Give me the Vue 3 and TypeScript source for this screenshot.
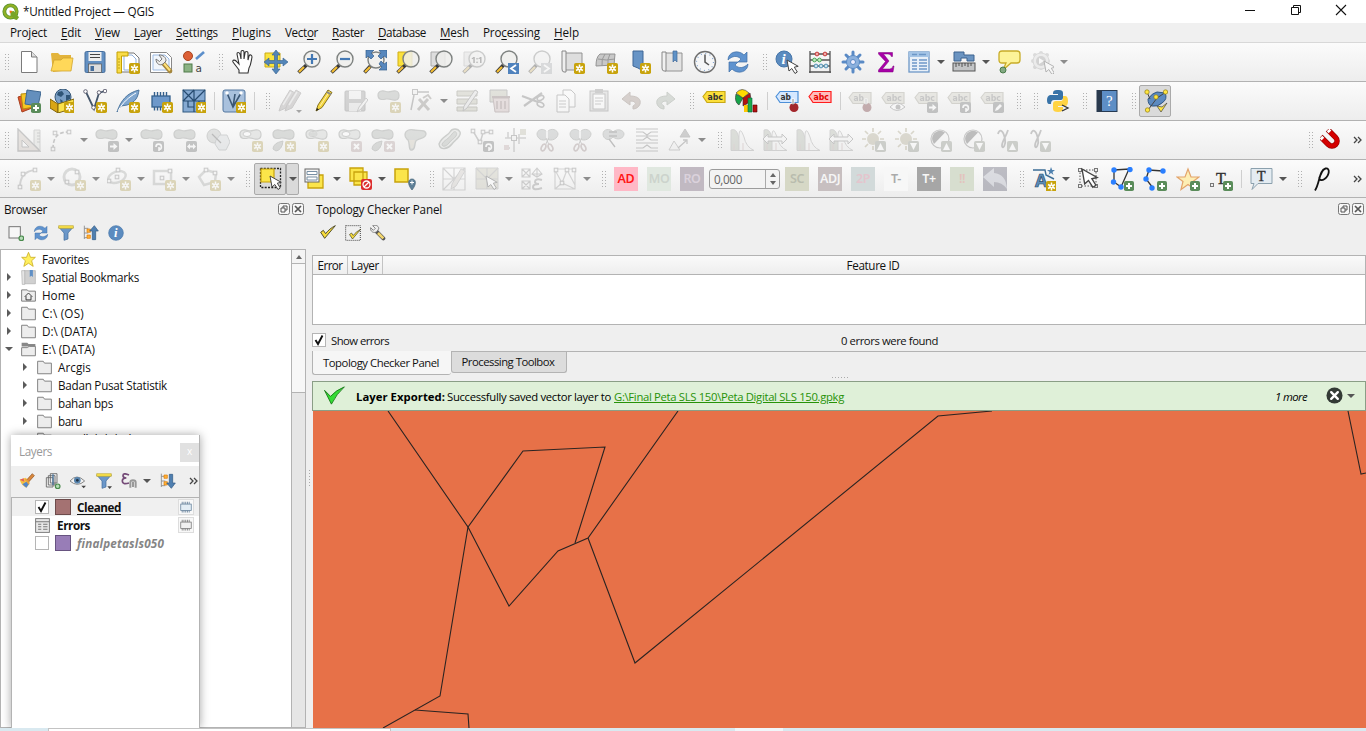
<script setup lang="ts">
type Item = { k: string; i?: string; dim?: boolean; on?: boolean; arrow?: boolean; w?: number; t?: string; bg?: string; fg?: string }

// Adjusts tracking so a label occupies the given width.
const vFit = {
  mounted(el: HTMLElement, b: { value: number }) {
    const n = (el.textContent || '').trim().length
    const w = el.getBoundingClientRect().width
    if (n > 0 && b.value) el.style.letterSpacing = `${(b.value - w) / n}px`
  },
}

const star = (x = 13, y = 13) =>
  `<g transform="translate(${x} ${y})"><rect width="11" height="11" rx="1.8" fill="#c8a30c"/><path d="M5.5 1.6v7.8M2.1 3.5l6.8 4M8.9 3.5l-6.8 4" stroke="#fff" stroke-width="1.5"/><circle cx="5.5" cy="5.5" r="1.9" fill="#fff"/><circle cx="5.5" cy="5.5" r=".8" fill="#c8a30c"/></g>`
const plus = (x = 13, y = 13) =>
  `<g transform="translate(${x} ${y})"><rect width="10" height="10" rx="1.8" fill="#5a8c5a"/><path d="M5 2v6M2 5h6" stroke="#fff" stroke-width="2"/></g>`
const badge = (g: string, c = '#6b7070') =>
  `<g transform="translate(13 13)"><rect width="11" height="11" rx="1.8" fill="${c}"/>${g}</g>`
const bArrow = badge('<path d="M2 4.5h3.5V2L9.500 5.500 5.500 9V6.500H2z" fill="#fff"/>')
const bTurn = badge('<path d="M3 6a2.700 2.700 0 1 1 3 2.500M6 6v4" fill="none" stroke="#fff" stroke-width="1.600"/>')
const bBoth = badge('<path d="M1 5.500l3-3v2h3v-2l3 3-3 3v-2H4v2z" fill="#fff"/>')
const bX = badge('<path d="M3 3l5 5M8 3l-5 5" stroke="#fff" stroke-width="2"/>', '#c49a9a')
const bUp = badge('<path d="M5.500 2L9 9H2z" fill="#fff"/>', '#85907a')
const bDown = badge('<path d="M5.500 9L9 2H2z" fill="#fff"/>', '#85907a')
const bPen = badge('<path d="M2 9l1-3 4-4 2 2-4 4z" fill="#fff"/>')
const lens = (x: number, y: number, inner = '') =>
  `<path d="M1.500 22.500L${x - 5.500} ${y + 6}" stroke="#3a3a3a" stroke-width="3.600"/><path d="M2 22l5-5" stroke="#f5bf33" stroke-width="2.200"/><circle cx="${x}" cy="${y}" r="8" fill="#eeeeec" fill-opacity=".85" stroke="#7e8280" stroke-width="1.400"/>${inner}`
const cursor = (x: number, y: number) =>
  `<path transform="translate(${x} ${y})" d="M0 0l2 11 2.800-2.500 3.200 5 2.300-1.500-3-4.800 3.900-.900z" fill="#fff" stroke="#444" stroke-width="1"/>`
const blob = '<path d="M1 6C1 2 5 1 9 2.500S15 1 19 2s4 8 0 9-6-2-10-1S1 11 1 6z" fill="#a5ada5" stroke="#858b85" stroke-width="1.200"/>'
const ring = '<path d="M1 6C1 2 5 1 9 2.500S15 1 19 2s4 8 0 9-6-2-10-1S1 11 1 6z" fill="#c6cbc6" stroke="#858b85" stroke-width="1.200"/><ellipse cx="8" cy="6" rx="4" ry="2.500" fill="#fff" stroke="#858b85"/>'
const tag = (f: string, s: string, c: string, txt = 'abc') =>
  `<path d="M1 8.500L5 3.500h18v11H5z" fill="${f}" stroke="${s}" stroke-width="1.200"/><text x="5.500" y="12.300" font-size="9.500" font-family="DejaVu Sans" font-weight="bold" textLength="${txt === 'abc' ? 15.5 : 10.5}" lengthAdjust="spacingAndGlyphs" fill="${c}">${txt}</text>`
const pin = '<circle cx="19" cy="18.500" r="4.500" fill="#a3262b"/><path d="M18 15V9.500" stroke="#fff" stroke-width="3"/><path d="M18 16v-6" stroke="#888" stroke-width="1"/>'
const node = (x: number, y: number, r = 1.8) => `<rect x="${x - r}" y="${y - r}" width="${2 * r}" height="${2 * r}" fill="#eee" stroke="#777" stroke-width="1"/>`
const dot = (x: number, y: number) => `<circle cx="${x}" cy="${y}" r="2.700" fill="#2a7fff"/>`
const snip = '<path d="M11 11C6 14 1 10 1 6s6-7 10-2c4-5 11-2 11 2s-6 8-11 5z" fill="#a9b1b1" stroke="#858b85"/><path d="M11 2v11" stroke="#fff" stroke-width="1.500"/><path d="M9.500 17l3-7M13 17l-3-7" stroke="#888"/><ellipse cx="7.500" cy="19.500" rx="2" ry="3.500" fill="none" stroke="#a88" stroke-width="1.700" transform="rotate(25 7.500 19.500)"/><ellipse cx="14.500" cy="19.500" rx="2" ry="3.500" fill="none" stroke="#a88" stroke-width="1.700" transform="rotate(-25 14.500 19.500)"/>'
const refresh = '<path d="M2 10C2 2 12-1 18 5l3-3v10h-9l3-3c-4-4-9-3-13 1z" fill="#5f93cf" stroke="#3f6ea5" stroke-width=".7"/><path d="M22 14c0 8-10 11-16 5l-3 3V12h9l-3 3c4 4 9 3 13-1z" fill="#5f93cf" stroke="#3f6ea5" stroke-width=".7"/>'
const hist = '<path d="M1 22.500V2q5-2 7 5l5 15.500z" fill="#a9b59e" stroke="#999"/><path d="M9 22.500V6q1-8 5 3 2 10 10 13.500z" fill="#eee" stroke="#999"/><path d="M4 22v-6M13 22v-7" stroke="#c99" stroke-width="1"/>'
const wide = '<path d="M0 11l5-5v3h14V6l5 5-5 5v-3H5v3z" fill="#f2f2f2" stroke="#777"/>'
const sun = '<g stroke="#ae9e62" stroke-width="1.700"><path d="M11 0v4M11 18v4M0 11h4M18 11h4M3 3l3 3M16 6l3-3M3 19l3-3"/></g><circle cx="11" cy="11" r="6" fill="#b1a671"/>'
const contrast = '<circle cx="12" cy="11" r="9" fill="#f5f5f5" stroke="#777" stroke-width="1.200"/><path d="M17 4.500A8 8 0 0 0 6 16z" fill="#5a5a5a"/>'
const gamma = '<path d="M4 6C5 1 9 1 11 11c1 5-2 11-3 7-.500-4 4-9 6-16" fill="none" stroke="#777" stroke-width="1.800"/>'
const pencil = (c = '#f5d63d') => `<path d="M3 22l2-6L15 1l4 2.500-10 15z" fill="${c}" stroke="#857220" stroke-width="1"/><path d="M7 17L16.500 2.500" stroke="#fff" stroke-width="1" opacity=".6"/><path d="M3 22l1-3 2 1.500z" fill="#222"/><path d="M14 3l4 2.500" stroke="#888" stroke-width="2"/>`
const gpencil = '<path d="M2 22l2-6L13 1l5 3-9 15z" fill="#a9a2a2" stroke="#8a8383"/><path d="M6 16L14 3" stroke="#ddd" stroke-width="1.500"/>'
const check = '<path d="M1 11l6 9L23 1C17 4 12 8 8.500 13L5 8z" fill="#f7dc3d" stroke="#3d3a1a" stroke-width="1.300"/>'
const chip = (c: string, f: string) => `<rect x="3" y="7" width="18" height="11" fill="${f}" stroke="${c}" stroke-width="1.300"/><path d="M5.500 3v4M8.500 3v4M11.500 3v4M14.500 3v4M17.500 3v4M5.500 18v3.500M8.500 18v3.500M11.500 18v3.500M14.500 18v3.500M17.500 18v3.500" stroke="${c}" stroke-width="1.400"/>`
const wrench = '<path d="M10 10l10 10" stroke="#555" stroke-width="6" stroke-linecap="round"/><path d="M12 12l8 8" stroke="#f2d66c" stroke-width="4"/><path d="M4 1l4 4-3 3-4-4c-1 6 5 9 9 6l3-4C14 2 9-1 4 1z" fill="#eee" stroke="#777" stroke-width="1.300"/>'
const funnel = '<path d="M1 3h22l-8 9v9l-6 2V12z" fill="#6b97c9" stroke="#406a98"/><path d="M1 1h22v4H1z" fill="#f8e04b" stroke="#b19a22" stroke-width=".8"/>'

const icons: Record<string, string> = {
  newp: '<path d="M4.500 1.500h10l5.500 5.500v15.500H4.500z" fill="#fff" stroke="#7b7b7b"/><path d="M14.500 1.500v5.500H20" fill="#ddd" stroke="#7b7b7b"/>',
  open: '<path d="M1 4q0-1 1-1h6l2 2h11v15l-18 2z" fill="#e3b43c"/><path d="M4 10h7l2-2h10l-2 13H1z" fill="#ffd859" stroke="#d0a42e" stroke-width=".8"/>',
  save: '<rect x="2" y="1.500" width="20" height="21" rx="1.500" fill="#6390c2" stroke="#456d9b"/><rect x="5.500" y="2" width="13" height="9" fill="#eee"/><path d="M7 4.500h10M7 7.500h10" stroke="#444" stroke-width="1"/><rect x="5.500" y="14" width="13" height="8.500" fill="#ddd" stroke="#555" stroke-width=".7"/><rect x="7.500" y="16" width="3.500" height="5" fill="#456d9b"/>',
  layout: '<path d="M4 3h14l5 5v14H4z" fill="#fff" stroke="#777"/><path d="M8 5h8l4 4v11H8z" fill="none" stroke="#8fb0dc"/><path d="M1 2h11v4H5.500v17H1z" fill="#f9dc49" stroke="#c4a000"/><path d="M2 9h2M2 12h2M2 15h2M2 18h2" stroke="#a88b00" stroke-width=".7"/>' + star(),
  manager: '<path d="M1.500 2.500h16l5 5v15h-21z" fill="#fff" stroke="#888"/><path d="M4 5h12l4 4v11H4z" fill="#f1f6fc" stroke="#9dbbe4"/><path d="M14 13l7 8" stroke="#a6863a" stroke-width="4.500" stroke-linecap="round"/><path d="M15 13.500l6 7" stroke="#ffe27a" stroke-width="2"/><path d="M10 5l3 4-2.500 2.500L7 9c0 5 4 7 7 5l3-3c0-4-3-6-7-6z" fill="#eee" stroke="#777"/>',
  style: '<circle cx="6" cy="6" r="4.500" fill="#dc6036" stroke="#a9441e"/><path d="M14 9l8-7" stroke="#5c8fcb" stroke-width="2.600"/><rect x="2" y="14" width="8" height="8" fill="#8bb283" stroke="#4f7a48"/><text x="13.500" y="22" font-family="DejaVu Sans" font-size="10.500" fill="#444">a</text>',
  hand: '<path d="M8 23v-3c-2-3-4-5-6-8-1-2 2-3 4 0l2 2L6 4c0-2 2-2 3 0l1 5V2c0-2 3-2 3 0v7l1-6c0-2 3-2 3 0v7l1-4c1-2 3-1 3 1-1 5-1 8-3 11l-1 5z" fill="#fff" stroke="#333" stroke-width="1.100"/>',
  pansel: '<path d="M1 3h15v14H1z" fill="#fae43d" stroke="#ccab16"/><path d="M12 0l4 5h-2.500v5.500H19V8l5 4-5 4v-2.500h-5.500V19H16l-4 5-4-5h2.500v-5.500H5V16l-5-4 5-4v2.500h5.500V5H8z" fill="#5385b8" stroke="#33608f" stroke-width=".6"/>',
  zin: lens(15, 9, '<path d="M15 4v10M10 9h10" stroke="#4479b4" stroke-width="2.200"/>'),
  zout: lens(15, 9, '<path d="M10 9h10" stroke="#4479b4" stroke-width="2.200"/>'),
  zfull: lens(13, 10) + '<path d="M3 0h8L8 3l3 3-3 3-3-3-2 2zM24 0v8l-3-2-3 3-3-3 3-3-2-3zM24 20h-8l3-3-3-3 2-3 3 3 3-2z" fill="#5787bd" stroke="#345f8e" stroke-width=".7"/>',
  zsel: '<path d="M2 2h14v14H2z" fill="#fae13c" stroke="#d0ae17"/>' + lens(15, 9),
  zlay: '<path d="M2 2h14v14H2z" fill="#ddd" stroke="#aaa"/>' + lens(15, 9),
  znat: '<path d="M2 2h14v14H2z" fill="#ddd" stroke="#aaa"/>' + lens(15, 9, '<text x="9" y="12.500" font-size="9" font-weight="bold" font-family="Open Sans" fill="#444" textLength="12">1:1</text>'),
  zlast: lens(14, 9) + '<rect x="13" y="13" width="11" height="11" fill="#4f82bd"/><path d="M21 15l-5 3.500 5 3.500" fill="none" stroke="#fff" stroke-width="1.800"/>',
  znext: lens(14, 9) + '<rect x="13" y="13" width="11" height="11" fill="#a9b0b6"/><path d="M16 15l5 3.500-5 3.500" fill="none" stroke="#fff" stroke-width="1.800"/>',
  map: '<path d="M4 3h17v17H4z" fill="#dedede" stroke="#929292"/><path d="M1 1h4v21H3q-2 0-2-3z" fill="#eee" stroke="#888"/>' + star(),
  mesh3d: '<path d="M6 4l15 0-1 11-18 1q0-9 4-12z" fill="#c8c8c8" stroke="#929292"/><path d="M4 9q8 2 17 0M11 4Q7 9 8 16M16 4q-3 5-2 12" fill="none" stroke="#999"/>' + star(),
  bm: '<path d="M6 1h10v20l-5-3-5-2z" fill="#6794c6" stroke="#3f6796"/>' + star(),
  book: '<path d="M5 3h17v18H5z" fill="#e3e3e3" stroke="#929292"/><path d="M2 2h4v19H4q-2 0-2-3z" fill="#f1f1f1" stroke="#888"/><path d="M13 1h4v11l-2-2-2 2z" fill="#5f92c7" stroke="#40699a" stroke-width=".7"/>',
  clock: '<circle cx="12" cy="12" r="10.500" fill="#f5f6f7" stroke="#6f6f6f" stroke-width="1.400"/><circle cx="12" cy="12" r="8.500" fill="none" stroke="#85a6cf" stroke-width="1.200" stroke-dasharray="1 3.450"/><path d="M12 4.500V12l4 3" fill="none" stroke="#555" stroke-width="1.500"/>',
  refresh,
  ident: '<circle cx="9" cy="9" r="8" fill="#5b8bbf" stroke="#4676aa"/><text x="6.500" y="14" font-family="Liberation Serif" font-style="italic" font-weight="bold" font-size="15" fill="#fff">i</text>' + cursor(12, 10),
  abacus: '<path d="M2 1v22M22 1v22M2 4h20M2 10h20M2 16h20M1 22h22" stroke="#555" stroke-width="1.300"/><g fill="#f4aaa8" stroke="#c53a3a"><circle cx="9" cy="4" r="1.900"/><circle cx="17" cy="4" r="1.900"/></g><g fill="#bfe8bf" stroke="#4ea75b"><circle cx="6.500" cy="10" r="1.900"/><circle cx="11.500" cy="10" r="1.900"/></g><g fill="#cbe2ee" stroke="#5292b4"><circle cx="8" cy="16" r="1.900"/><circle cx="13" cy="16" r="1.900"/><circle cx="18" cy="16" r="1.900"/></g>',
  gear: '<g stroke="#5a8ac5" stroke-width="3" stroke-linecap="round"><path d="M12 2v20M2 12h20M5 5l14 14M19 5L5 19"/></g><circle cx="12" cy="12" r="6.500" fill="#8bb0dd" stroke="#5a8ac5"/><circle cx="12" cy="12" r="2.500" fill="#eef" stroke="#5a8ac5"/>',
  sigma: '<path d="M4.500 2.500h14v4h-1.200Q17 4 14 4H9.500l5.500 7-6.500 8h7q3 0 3.500-3h1l-1 6H4.500v-2l7-8.500-7-7.500z" fill="#a800a8" stroke="#7c007c" stroke-width=".5"/>',
  table: '<rect x="2" y="2" width="20" height="20" fill="#e9f0f8" stroke="#6d97c7" stroke-width="1.300"/><path d="M2 2h20v5H2z" fill="#a4c4e6"/><path d="M5 4.500h5M12 4.500h7M5 10h5M12 10h8M5 13h5M12 13h8M5 16h5M12 16h8M5 19h5M12 19h8" stroke="#6d97c7" stroke-width="1.300"/>',
  measure: '<path d="M2 2h10v3h10v6h-7V8H9v3H2z" fill="#6b94c1" stroke="#3c628f"/><rect x="1" y="13" width="22" height="8" fill="#c3c5c7" stroke="#555"/><path d="M4 13v4M7 13v3M10 13v4M13 13v3M16 13v4M19 13v3" stroke="#444" stroke-width=".9"/>',
  tip: '<path d="M5 1h15q3 0 3 3v6q0 3-3 3h-6l-8 7 3-7H5q-3 0-3-3V4q0-3 3-3z" fill="#fdf398" stroke="#c8ac28" stroke-width="1.300"/><circle cx="6" cy="20" r="3" fill="#83a983" stroke="#497c49"/>',
  run: '<g stroke="#aaa" stroke-width="4" stroke-linecap="round"><path d="M11 3v15M3 11h15M5 5l12 12M17 5L5 17"/></g><circle cx="11" cy="11" r="8" fill="#ddd" stroke="#aaa"/><circle cx="11" cy="11" r="5" fill="#999"/><path d="M9 8l5 3-5 3z" fill="#fff"/>' + cursor(14, 11),
  dsm: '<path d="M1 8l10-3 4 14-10 4z" fill="#e1592d" stroke="#a63f1d"/><path d="M4 5l11-1 2 14-11 2z" fill="#f7c524" stroke="#b58c0e"/><path d="M10 1l14 2-3 14-13-2z" fill="#648fbd" stroke="#3f6892"/>' + plus(14, 14),
  geopkg: '<circle cx="13" cy="8" r="8" fill="#7a9fc5" stroke="#365777"/><path d="M8 3l4-1 2 3-3 3-4-2zM16 6l4 0 0 4-4 2zM10 10l3 2-2 3" fill="#2f5577"/><path d="M0 10l8 5v9L0 19z" fill="#d9a514" stroke="#80650c"/><path d="M8 15l16-5v9L8 24z" fill="#fbe24a" stroke="#80650c"/>' + star(14, 13),
  vec: '<path d="M3 3l8 17L16 4l6-2" fill="none" stroke="#45566a" stroke-width="1.800"/><g fill="#fff" stroke="#667"><circle cx="2.500" cy="2.500" r="1.800"/><circle cx="16" cy="3.500" r="1.800"/><circle cx="22" cy="2" r="1.800"/><circle cx="10.500" cy="18.500" r="1.800"/></g>' + star(),
  quill: '<path d="M1 23C5 11 11 4 23 1 22 8 20 13 11 16L5 17z" fill="#7fa6cf" stroke="#4d769f"/><path d="M2 22C7 13 13 8 20 4" stroke="#fff" stroke-width="1" fill="none"/>' + star(),
  chip: chip('#34608d', '#6d98ca') + star(),
  meshl: '<rect x="1" y="1" width="22" height="22" fill="#86aad2" stroke="#2f5880"/><path d="M1 1l11 11M12 1L1 12M23 1L12 12M12 1v22M1 12h22M17 12v11M6 12v6h6" fill="none" stroke="#264b70" stroke-width="1.200"/>' + star(14, 13),
  virt: '<rect x="1" y="1" width="22" height="22" rx="2" fill="#a9c1dd" stroke="#53779f"/><path d="M5 4l6 14L19 4M11 18l2-13" fill="none" stroke="#3b5775" stroke-width="1.600"/><circle cx="5" cy="4" r="1.700" fill="#fff"/><circle cx="19" cy="4" r="1.700" fill="#fff"/>' + star(14, 13),
  pencils: '<g transform="translate(-1 0)">' + gpencil + '</g><g transform="translate(5 0)">' + gpencil + '</g><path d="M18 21h6l-3 3z" fill="#222"/>',
  pencil: '<g transform="translate(2 0)">' + pencil() + '</g>',
  savee: '<rect x="1" y="2" width="20" height="20" rx="1" fill="#999" stroke="#777"/><rect x="5" y="2" width="12" height="8" fill="#eee"/><rect x="5" y="14" width="12" height="8" fill="#ddd"/><path d="M13 23l2-5 7-9 2 2-7 9z" fill="#eee" stroke="#888"/>',
  blobnew: blob + star(), vtx: node(5, 3, 2.5) + '<path d="M7 3h12M4 6L1 21" stroke="#777" stroke-width="1.500" fill="none"/><path d="M8 21l10-11M9 10l10 11" stroke="#8a857c" stroke-width="3"/><path d="M13 9l5-3 3 4" stroke="#8a857c" stroke-width="2" fill="none"/>',
  modattr: '<path d="M2 2h20v5H2zM2 10h20v5H2zM2 18h20v4H2z" fill="#c0bfa0" stroke="#808065"/><path d="M8 22l1-5L20 1l3 2-11 16z" fill="#ddd" stroke="#777"/>',
  trash: '<path d="M2 1h17v12H2z" fill="#bdbd9c" stroke="#777"/><path d="M5 9h16v14H7z" fill="#dcb4b4" stroke="#946c6c"/><path d="M4 8h18" stroke="#946c6c" stroke-width="2"/><path d="M9 12v8M13 12v8M17 12v8" stroke="#946c6c" stroke-width="1.500"/>',
  cut: '<path d="M1 7l16 6M3 17L21 4" stroke="#777" stroke-width="2.200"/><ellipse cx="19.500" cy="9" rx="3.500" ry="2.200" fill="none" stroke="#777" stroke-width="1.600" transform="rotate(-25 19.500 9)"/><ellipse cx="19.500" cy="15.500" rx="3.500" ry="2.200" fill="none" stroke="#777" stroke-width="1.600" transform="rotate(25 19.500 15.500)"/>',
  copy: '<path d="M9 1h8l4 4v13H9z" fill="#fff" stroke="#777"/><path d="M3 6h8l4 4v13H3z" fill="#fff" stroke="#777"/><path d="M5 12h7M5 15h7M5 18h7" stroke="#888"/>',
  paste: '<rect x="3" y="2" width="18" height="20" fill="#ccc" stroke="#777"/><rect x="6" y="5" width="12" height="15" fill="#fff" stroke="#777"/><rect x="8" y="0" width="8" height="4" fill="#888"/><path d="M8 9h8M8 12h8M8 15h6" stroke="#888"/>',
  undo: '<path d="M2 10l8-7v4c9 0 11 4 10 8-1 3-4 5-7 5v-3c4-2 3-5-3-5v4z" fill="#b08d7a" stroke="#8d6e5e"/>',
  redo: '<path d="M22 10l-8-7v4C5 7 3 11 4 15c1 3 4 5 7 5v-3c-4-2-3-5 3-5v4z" fill="#9fb19b" stroke="#7b8e77"/>',
  abc: '<g transform="translate(0 -1)">' + tag('#fcdf3a', '#c8a814', '#333') + '</g>',
  diag: '<path d="M8 9L1 5q-2 8 3 11z" fill="#16a349" stroke="#333" stroke-width=".6"/><path d="M8 9L1 4q6-7 13 0z" fill="#ffda00" stroke="#333" stroke-width=".6"/><path d="M8 9l7-5q3 9-7 13z" fill="#b51010" stroke="#333" stroke-width=".6"/><path d="M9 16h4v7H9z" fill="#ffc800"/><path d="M13 9h4v14h-4z" fill="#1cab4c" stroke="#064" stroke-width=".6"/><path d="M18 16h4v7h-4z" fill="#b51010" stroke="#500" stroke-width=".6"/>',
  abpin: '<g transform="translate(0 -1)">' + tag('#d5e8ff', '#4d90d8', '#333', 'ab') + '</g>' + pin,
  abcred: '<g transform="translate(0 -1)">' + tag('#ffbcbc', '#ff1d1d', '#e60000') + '</g>',
  dpin: tag('#cfcbb4', '#9d9a80', '#777', 'ab') + pin,
  deye: tag('#cfcbb4', '#9d9a80', '#777') + '<path d="M9 18q7-8 15 0-8 7-15 0z" fill="#fff" stroke="#777"/><circle cx="17" cy="18" r="2.500" fill="#777"/>',
  dmove: tag('#cfcbb4', '#9d9a80', '#777') + bArrow, drot: tag('#cfcbb4', '#9d9a80', '#777') + bTurn, dpen: tag('#cfcbb4', '#9d9a80', '#777') + bPen,
  py: '<path d="M7 6V4q0-3 4-3h2q4 0 4 3v5q0 2-2 2H8q-3 0-3 4H3q-2 0-2-4t3-5h8V5H7z" fill="#3873a8"/><path d="M17 7h2q3 0 3 5t-3 5h-7v1h5v2q0 3-5 3t-5-3v-5q0-3 3-3h5q2 0 2-3z" fill="#ffd343"/><path d="M16 16l6 3-6 3" fill="none" stroke="#333" stroke-width="1.300"/>',
  help: '<rect x="2" y="1.500" width="20" height="21" fill="#5d8ec5" stroke="#263a52"/><path d="M2 1h5v22H2z" fill="#29394d"/><text x="11" y="17" font-size="15" font-family="Liberation Serif" fill="#fff">?</text>',
  topo: '<path d="M4 10q4-6 9-7l8 1q3 6-3 10-4 4-10 3-4-1-4-7z" fill="#5c8ac0" stroke="#2f5784"/><path d="M3 3l3 7M22 3l-9 6-9 12" fill="none" stroke="#444"/><g fill="#ffe640" stroke="#8f7c18" stroke-width=".7"><circle cx="3" cy="3" r="2.200"/><circle cx="21.500" cy="3" r="2.200"/><circle cx="12" cy="8" r="2.200"/><circle cx="3.500" cy="21" r="2.200"/></g><path d="M13 17l4 6 6-9-5 4z" fill="#ffe640" stroke="#444" stroke-width=".7"/>',
  ruler: '<path d="M1 1v22h22z" fill="#d3bfb0" stroke="#777" stroke-width="1.400"/><path d="M5 12v7h7z" fill="#f5f5f5" stroke="#777"/><path d="M17 2h6v20l-6-6z" fill="#d9dbd0" stroke="#999"/><path d="M20 5h3M20 8h3M20 11h3M20 14h3" stroke="#888"/>',
  curve: '<path d="M3 21C3 10 7 4 18 4" fill="none" stroke="#777" stroke-width="1.600" stroke-dasharray="4 2"/>' + node(3, 21) + node(5, 5) + node(19, 4),
  bmove: blob + bArrow, brot: blob + bTurn, bscale: blob + bBoth,
  simp: '<circle cx="8" cy="8" r="7" fill="#b6bcb7" stroke="#858b87"/><path d="M10 12l4-5h7l3 7-4 8h-7l-4-6z" fill="#ced7dc" stroke="#8e989c"/><path d="M6 6l9 9" stroke="#555" stroke-width="1.300"/>',
  addring: ring + star(), addpart: blob + '<path d="M1 21q0-6 10-8-1 9-7 10z" fill="#a5ada5" stroke="#858b85"/>' + star(), fillring: ring + '<ellipse cx="8" cy="6" rx="3.500" ry="2" fill="#a5ada5"/>' + star(), delring: ring + bX,
  delpart: blob + '<path d="M1 21q0-6 10-8-1 9-7 10z" fill="#a5ada5" stroke="#858b85"/>' + bX,
  reshape: '<path d="M1 7C1 2 6 1 10 2s12-1 12 4-8 4-10 7 0 8-4 9S6 14 4 12 1 10 1 7z" fill="#adb5ae" stroke="#858d85" stroke-width="1.300"/><path d="M5 12h6l-2 8H7z" fill="#d0c5a5"/>',
  offset: '<path d="M2 16C5 8 11 8 13 4s8-4 10 0-5 8-8 12-12 8-13 0z" fill="#d5d9d2" stroke="#7f897f" stroke-width="1.400"/><path d="M5 16c2-4 7-5 10-10s6-1 4 2-5 4-7 7-7 5-7 1z" fill="#a9b0a5" stroke="#7f897f"/>',
  vsplit: '<path d="M3 3l7 12 3-10 8-1" fill="none" stroke="#888" stroke-width="1.500"/>' + node(3, 3) + node(10, 14) + node(13, 4) + node(21, 4) + bTurn,
  align: '<path d="M11 0v24M2 10h21M5 10V4M16 6v10M2 20h5" stroke="#999" stroke-width="1.600"/><rect x="17" y="1" width="6" height="6" fill="#bdbb97"/><rect x="1" y="17" width="5" height="5" fill="#d2a9a9"/>' + node(11, 10, 2.5),
  snip,
  merge: '<path d="M11 9C7 14 1 11 1 6s7-6 10-2c4-4 11-2 11 2s-6 7-11 3z" fill="#a9b1b1" stroke="#858b85"/><path d="M7 4h8M7 8h8M7 11l6 8" stroke="#666" stroke-width="1.300" fill="none"/>',
  trim: '<path d="M1 4h7l4 3 4-3h7M1 12h7l4-3 4 3h7M1 20h7l4-3 4 3h7M1 8h22M1 15h22M1 23h22M1 1h22" fill="none" stroke="#777" stroke-width="1.200"/>',
  rots: '<path d="M1 22h11L6 13z" fill="#eee" stroke="#888"/><path d="M12 9h10L17 1z" fill="#888" stroke="#777"/><path d="M10 20l9-8M15 12h4v4" fill="none" stroke="#777" stroke-width="1.300"/>',
  h1: hist, h2: hist + wide, sunu: sun + bUp, sund: sun + bDown, conu: contrast + bUp, cond: contrast + bDown, gamu: gamma + bUp, gamd: gamma + bDown,
  magnet: '<g transform="rotate(-45 12 12)"><path d="M6.500 1.500v12a5.500 5.500 0 0 0 11 0v-12" fill="none" stroke="#970000" stroke-width="6"/><path d="M6.500 5v8.500a5.500 5.500 0 0 0 11 0V5" fill="none" stroke="#d40000" stroke-width="4.600"/><path d="M6.500 2v3M17.500 2v3" stroke="#fff" stroke-width="4.200"/></g>',
  arc: '<path d="M3 20C3 10 8 4 18 3" fill="none" stroke="#999" stroke-width="2"/>' + node(3, 20) + node(6, 7) + node(18, 3) + star(),
  circ: '<circle cx="10" cy="10" r="8" fill="none" stroke="#a5aaa5" stroke-width="3"/>' + node(15, 5) + node(5, 15) + star(),
  ell: '<ellipse cx="10" cy="10" rx="9" ry="5.500" transform="rotate(-20 10 10)" fill="none" stroke="#a5aaa5" stroke-width="2.500"/>' + node(11, 3) + node(2, 14) + node(10, 10) + star(),
  rect: '<rect x="2" y="4" width="17" height="13" fill="none" stroke="#a5aaa5" stroke-width="2.500"/>' + node(18, 4) + node(10, 11) + star(),
  poly: '<path d="M2 10l7-7 10 3-1 9-11 3z" fill="none" stroke="#a5aaa5" stroke-width="2.500"/>' + node(9, 3) + node(18, 6) + star(),
  sel: '<rect x="1.500" y="1.500" width="20" height="19" fill="none" stroke="#222" stroke-width="1.300" stroke-dasharray="2 1.300"/><path d="M2 2h13v13H2z" fill="#fbe54a" stroke="#c8a30c" stroke-width="1.200"/>' + cursor(11, 9),
  selval: '<path d="M5 8h15v13H5z" fill="#fbe54a" stroke="#c8a30c" stroke-width="1.300"/><rect x="2" y="2" width="14" height="13" fill="#f5f5f5" stroke="#666"/><path d="M4 4.500h10v3H4zM4 10h10v3H4z" fill="#fff" stroke="#7890a5"/>',
  desel: '<path d="M2 1h13v13H2zM6 5h13v13H6z" fill="#fbe54a" stroke="#c8a30c" stroke-width="1.300"/><rect x="13" y="12" width="11" height="11" rx="2" fill="#dc2d2d"/><circle cx="18.500" cy="17.500" r="3.500" fill="none" stroke="#fff" stroke-width="1.300"/><path d="M16 20l5-5" stroke="#fff" stroke-width="1.300"/>',
  selloc: '<path d="M2 2h13v13H2z" fill="#fbe54a" stroke="#c8a30c" stroke-width="1.500"/><path d="M19 23c-5-6-4-11 0-11s5 5 0 11z" fill="#5e8098" stroke="#456379" stroke-width=".7"/><path d="M19 13.500v4M17 15.500h4" stroke="#fff"/>',
  me: '<path d="M1 1h22v22H1zM1 12h22M12 1v22M1 1l11 11M12 12L23 1M1 23l11-11" fill="none" stroke="#999" stroke-width="1.200"/><path d="M9 22l1-5L19 2l4 2-9 15z" fill="#cec7bd" stroke="#999"/>',
  ms: '<path d="M1 1h22v21H1z" fill="#c6c3a0" stroke="#999"/><path d="M1 12h22M12 1v21M1 1l11 11L23 1" fill="none" stroke="#999" stroke-width="1.200"/>' + cursor(11, 9),
  mt: '<path d="M2 2h8v8H2zM2 2l8 8M10 2L2 10M2 14h8v8H2zM2 14l8 8M10 14l-8 8M12 7l5-6 5 6-5 3zM17 1v9M12 7h10" fill="none" stroke="#888" stroke-width="1.100"/><path d="M22 13q-7-2-7 2 0 2 4 2-6 0-6 3 0 4 9 1" fill="none" stroke="#888" stroke-width="2"/>',
  mf: '<path d="M2 2h20v20H2zM2 3l7 13L14 3l8 15M2 22l7-6 13 6" fill="none" stroke="#999" stroke-width="1.200"/>' + node(3, 3) + node(9, 16) + node(14, 3) + node(21, 3),
  back: '<rect width="24" height="24" fill="#55557c"/><path d="M0 10L11 1v5q12 1 13 16-5-7-13-7v5z" fill="#a9aecb"/>',
  astar: '<text x="3" y="20" font-size="18" font-family="Open Sans" font-weight="bold" fill="#5d8cb7" stroke="#294d6e" stroke-width=".7">A</text><path d="M1 3h12l1 5 8 4" fill="none" stroke="#3d6e96" stroke-width="1.400"/><path d="M19 0l1.200 3H23l-2.500 2 1 3-2.500-2-2.500 2 1-3L15 3h3z" fill="#4f81af"/>' + star(14, 14),
  asel: '<rect x="3" y="3" width="16" height="16" fill="none" stroke="#555" stroke-dasharray="1.500 1.500"/>' + node(3, 3, 1.500) + node(19, 3, 1.500) + node(3, 19, 1.500) + node(19, 19, 1.500) + '<g transform="translate(5 2) scale(1.350)">' + cursor(0, 0) + '</g>',
  apoly: '<path d="M4 3l15-1-8 18-7-5z" fill="none" stroke="#333" stroke-width="1.300"/>' + dot(4, 3) + dot(20, 2.500) + dot(3.500, 15) + dot(11, 20) + plus(14, 14),
  aline: '<path d="M20 4L6 3 3 12l7 9" fill="none" stroke="#333" stroke-width="1.300"/>' + dot(20, 4) + dot(6, 3) + dot(3, 12) + dot(9, 21) + plus(14, 14),
  amark: '<path d="M12 2l3 8h8l-6 4.500 2 8-7-5-7 5 2-8L1 10h8z" fill="#fdeeb4" stroke="#e3a46b" stroke-width="1.200"/>' + plus(14, 14),
  atext: '<text x="7" y="17" font-size="16" font-family="Liberation Serif" fill="#333" stroke="#333" stroke-width=".4">T</text>' + node(3, 18, 1.500) + plus(14, 14),
  aball: '<path d="M2 1.500h21v15H9l-6 6 2-6H2z" fill="#e4ecf2" stroke="#8ba0ad"/><text x="8" y="14" font-size="14" font-family="Liberation Serif" fill="#333" stroke="#333" stroke-width=".4">T</text>',
  rho: '<path d="M5 23.500C10 16 9 3 15.500 1.500c5-1 4 7-1 10.500-3 2-6 1-5-2" fill="none" stroke="#111" stroke-width="1.800"/>',
  addl: '<rect x="1.500" y="2.500" width="17" height="17" fill="#f7f7f7" stroke="#777" stroke-width="1.500"/><circle cx="20" cy="20" r="3.500" fill="#b6dcb8" stroke="#4a8b4d" stroke-width="1.800"/>',
  funnel, tree: '<path d="M2 1v20M2 5h6M2 12h6M2 19h6" stroke="#888" stroke-width="1.300"/><path d="M6 6h5v5H6zM6 15h5v5H6z" fill="#ffb13a" stroke="#e07b00"/><path d="M17 1l6 8h-4v13h-5V9h-4z" fill="#4f7fb0" stroke="#2d5682"/>',
  treed: '<path d="M2 1v20M2 5h6M2 12h6M2 19h6" stroke="#888" stroke-width="1.300"/><path d="M6 3h5v5H6zM6 13h5v5H6z" fill="#ffb13a" stroke="#e07b00"/><path d="M17 23l6-8h-4V2h-5v13h-4z" fill="#4f7fb0" stroke="#2d5682"/>',
  info: '<circle cx="12" cy="12" r="11" fill="#5b8bbf" stroke="#4676aa"/><text x="9" y="18" font-family="Liberation Serif" font-style="italic" font-weight="bold" font-size="19" fill="#fff">i</text>',
  check, checkbox: '<rect x="1" y="1" width="22" height="22" fill="none" stroke="#444" stroke-width="1.500" stroke-dasharray="1.500 1.500"/><g transform="translate(6 6) scale(.75)">' + check + '</g>', wrench,
  fav: '<path d="M12 .500l3.200 8H23l-6 5.500 2.500 9L12 18l-7.500 5L7 14 1 8.500h7.800z" fill="#ffef5e" stroke="#c9ae22" stroke-width="1.300"/>',
  smark: '<path d="M5 1h18v21H5z" fill="#d0d0d0" stroke="#aaa"/><path d="M1 1h5v22H2z" fill="#e5e5e5" stroke="#aaa"/><path d="M14 0h5v11l-2.500-2L14 11z" fill="#5f8fc5"/>',
  home: '<path d="M1 3h9l2 2h11v16H1z" fill="#ededed" stroke="#777" stroke-width="1.500"/><path d="M6 14l6-6 6 6M8 13v6h8v-6" fill="none" stroke="#333" stroke-width="1.500"/>',
  fold: '<path d="M1 2h9l2 3h11v17H1z" fill="#ededed" stroke="#7d7d7d" stroke-width="1.500"/>',
  foldo: '<path d="M1 1h9l2 2h11v4H1z" fill="#888"/><path d="M1 9h9l3-2h10v15H1z" fill="#ededed" stroke="#7d7d7d" stroke-width="1.500"/>',
  brush: '<path d="M1 10l9-3 6 9-5 6q-7-3-10-12z" fill="#f6c043"/><path d="M1 10l6-2 1 5z" fill="#e2605b"/><path d="M5 17l6-4 4 3-4 6z" fill="#5386c8"/><path d="M11 11l9-10 3 3-9 10z" fill="#d9873c" stroke="#8d4c15"/><path d="M10 9l5 7" stroke="#e8a13c" stroke-width="3"/>',
  grp: '<path d="M8 1h10v14H8zM5 4h10v14H5zM2 7h10v14H2z" fill="#eee" stroke="#666" stroke-width="1.300"/><path d="M12 2v16" stroke="#47759f" stroke-width="2"/><circle cx="19" cy="20" r="3.500" fill="#b6dcb8" stroke="#4a8b4d" stroke-width="1.800"/>',
  eye: '<path d="M0 12q10-12 22 0-11 10-22 0z" fill="#f2f2f2" stroke="#888" stroke-width="1.500"/><circle cx="11" cy="11" r="5" fill="#5884ad"/><circle cx="11" cy="11" r="2" fill="#234"/><path d="M17 19h7l-3.500 4z" fill="#444"/>',
  funneld: funnel + '<path d="M17 20h7l-3.500 4z" fill="#444"/>',
  eps: '<path d="M12 3Q3-1 3 4q0 3 5 3.500-6 0-6 4.500 0 6 10 3" fill="none" stroke="#754b78" stroke-width="2.600"/><path d="M14 22v-8q0-3 4-3t4 3v8M18 13v8" fill="none" stroke="#999" stroke-width="3"/>',
  attr: '<rect x="1" y="1" width="22" height="22" fill="#e8e8e8" stroke="#777" stroke-width="1.500"/><path d="M1 6h22M5 10h5M13 10h7M5 14h5M13 14h7M5 18h5M13 18h7" stroke="#777" stroke-width="1.800"/>',
  chipb: chip('#65809a', '#e3edf5'), chipg: chip('#777', '#f0f0f0'),
  ok: '<path d="M1 5l7 7Q14 5 24 1q-9 8-15 20z" fill="#34dd34" stroke="#137413" stroke-width="1"/>',
}

const g = (): Item => ({ k: 'grip' })
const s = (): Item => ({ k: 'sep' })
const on = (...n: string[]): Item[] => n.map((i) => ({ k: 'icon', i: i.replace('>', ''), arrow: i.endsWith('>') }))
const off = (...n: string[]): Item[] => on(...n).map((x) => ({ ...x, dim: true }))
const sq = (t: string, bg: string, fg: string): Item => ({ k: 'sq', t, bg, fg })

const rows: { left: Item[]; right: Item[] }[] = [
  { left: [g(), ...on('newp', 'open', 'save', 'layout', 'manager', 'style'), g(), ...on('hand', 'pansel', 'zin', 'zout', 'zfull', 'zsel', 'zlay'), ...off('znat'), ...on('zlast'), ...off('znext'), ...on('map', 'mesh3d', 'bm', 'book', 'clock', 'refresh'), g(), ...on('ident', 'abacus', 'gear', 'sigma', 'table>', 'measure>', 'tip'), ...off('run>')], right: [] },
  { left: [g(), ...on('dsm', 'geopkg', 'vec', 'quill', 'chip', 'meshl'), s(), ...on('virt'), s(), g(), ...off('pencils'), ...on('pencil'), ...off('savee', 'blobnew', 'vtx>', 'modattr', 'trash', 'cut', 'copy', 'paste', 'undo', 'redo'), g(), ...on('abc', 'diag'), s(), ...on('abpin', 'abcred'), s(), ...off('dpin', 'deye', 'dmove', 'drot', 'dpen'), g(), { k: 'grip', w: 17 }, ...on('py'), g(), ...on('help'), g(), { k: 'icon', i: 'topo', on: true }], right: [] },
  { left: [g(), ...off('ruler', 'curve>', 'bmove>', 'brot', 'bscale', 'simp', 'addring', 'addpart', 'fillring', 'delring', 'delpart', 'reshape', 'offset', 'vsplit', 'align', 'snip', 'snip', 'merge', 'trim', 'rots>'), { k: 'grip', w: 17 }, ...off('h1', 'h2', 'h1', 'h2', 'sunu', 'sund', 'conu', 'cond', 'gamu', 'gamd')], right: [g(), ...on('magnet')] },
  { left: [g(), ...off('arc>', 'circ>', 'ell>', 'rect>', 'poly>'), g(), { k: 'icon', i: 'sel', on: true, arrow: true }, ...on('selval>', 'desel>', 'selloc'), g(), ...off('me', 'ms>', 'mt', 'mf>'), g(), sq('AD', '#ffb8c6', '#ff1616'), sq('MO', '#e0e8e0', '#ccd3cc'), sq('RO', '#c1b9c2', '#dbd2dc'), { k: 'spin' }, sq('SC', '#d6d8c6', '#b9bcae'), sq('ADJ', '#c7bfc0', '#f5f5f5'), sq('2P', '#d2dada', '#e4c5cd'), sq('T-', '#f7f7f7', '#aaa'), sq('T+', '#a6a6a6', '#f7f7f7'), sq('!!', '#d7decf', '#e3c3bd'), ...off('back'), g(), ...on('astar>', 'asel', 'apoly', 'aline', 'amark', 'atext'), s(), ...on('aball>'), g(), ...on('rho')], right: [] },
]

const menus: [string, string, string, number][] = [
  ['Pro', 'j', 'ect', 37], ['', 'E', 'dit', 20], ['', 'V', 'iew', 25], ['', 'L', 'ayer', 28], ['', 'S', 'ettings', 42], ['', 'P', 'lugins', 39],
  ['Vect', 'o', 'r', 33], ['', 'R', 'aster', 32], ['', 'D', 'atabase', 48], ['', 'M', 'esh', 29], ['Pro', 'c', 'essing', 57], ['', 'H', 'elp', 25],
]

const tree = [
  { t: 'Favorites', i: 'fav', w: 47, a: '', d: 0 }, { t: 'Spatial Bookmarks', i: 'smark', w: 97, a: 'c', d: 0 }, { t: 'Home', i: 'home', w: 33, a: 'c', d: 0 },
  { t: 'C:\\ (OS)', i: 'fold', w: 42, a: 'c', d: 0 }, { t: 'D:\\ (DATA)', i: 'fold', w: 55, a: 'c', d: 0 }, { t: 'E:\\ (DATA)', i: 'foldo', w: 53, a: 'o', d: 0 },
  { t: 'Arcgis', i: 'fold', w: 33, a: 'c', d: 1 }, { t: 'Badan Pusat Statistik', i: 'fold', w: 109, a: 'c', d: 1 }, { t: 'bahan bps', i: 'fold', w: 55, a: 'c', d: 1 },
  { t: 'baru', i: 'fold', w: 24, a: 'c', d: 1 }, { t: 'Disuillidiskdesl', i: 'fold', w: 73, a: 'c', d: 1 },
]
</script>

<template>
  <div class="app">
    <header class="title">
      <svg class="logo" viewBox="0 0 16 16"><circle cx="8" cy="8" r="5.800" fill="none" stroke="#589632" stroke-width="3.600" /><circle cx="8" cy="8" r="5.800" fill="none" stroke="#93b023" stroke-width="2" /><path d="M8 8l3-.5 5 6-2 2.500-2-.5-4-4z" fill="#77a529" /><path d="M7 7l3 .5-2.500 2.500z" fill="#ee7913" /></svg>
      <span v-fit="131" class="ttext">*Untitled Project — QGIS</span>
      <div class="wins">
        <svg viewBox="0 0 12 12"><path d="M1 6.500h10" stroke="#111" /></svg>
        <svg viewBox="0 0 12 12"><path d="M1.500 3.500h7v7h-7zM3.500 3.500v-2h7v7h-2" fill="none" stroke="#111" /></svg>
        <svg viewBox="0 0 12 12"><path d="M1 1l10 10M11 1L1 11" stroke="#111" stroke-width="1.100" /></svg>
      </div>
    </header>
    <nav class="menu">
      <span v-for="m in menus" :key="m[1] + m[2]" class="mi" :style="{ width: m[3] + 'px' }"><span v-fit="m[3]">{{ m[0] }}<u>{{ m[1] }}</u>{{ m[2] }}</span></span>
    </nav>

    <div v-for="(r, ri) in rows" :key="ri" class="bar" :class="{ last: ri === 3 }">
      <template v-for="(it, n) in r.left" :key="n">
        <span v-if="it.k === 'grip'" class="grip" :class="{ wide: it.w }" />
        <span v-else-if="it.k === 'sep'" class="sep" />
        <span v-else-if="it.k === 'sq'" class="cell"><span class="sq" :style="{ background: it.bg, color: it.fg }">{{ it.t }}</span></span>
        <span v-else-if="it.k === 'spin'" class="spinc"><span class="spin"><span v-fit="28" class="val">0,000</span><span class="ud"><i class="up" /><i class="dn" /></span></span></span>
        <template v-else>
          <span class="cell" :class="{ on: it.on, split: it.on && it.arrow }"><svg class="ic" :class="{ dim: it.dim }" viewBox="0 0 24 24" v-html="icons[it.i!]" /></span>
          <span v-if="it.arrow" class="arr" :class="{ on: it.on }"><i class="tri" :class="{ pale: it.dim }" /></span>
        </template>
      </template>
      <span class="grow" />
      <template v-if="r.right.length">
        <span class="grip" /><span class="cell mag"><svg class="ic" viewBox="0 0 24 24" v-html="icons.magnet" /></span>
      </template>
      <svg v-if="ri > 1" class="more" viewBox="0 0 17 12"><path d="M5 3l3 3-3 3M9 3l3 3-3 3" fill="none" stroke="#444" stroke-width="1.300" /></svg>
    </div>

    <main class="work">
      <aside class="dock">
        <div class="dhead"><span v-fit="43">Browser</span><span class="grow" />
          <svg class="db" viewBox="0 0 12 12"><rect x=".5" y=".5" width="11" height="11" rx="2" fill="#f7f7f7" stroke="#777" /><path d="M3 5h4v4H3zM5 5V3h4v4H7" fill="none" stroke="#555" /></svg>
          <svg class="db" viewBox="0 0 12 12"><rect x=".5" y=".5" width="11" height="11" rx="2" fill="#f7f7f7" stroke="#777" /><path d="M3 3l6 6M9 3L3 9" stroke="#555" stroke-width="1.700" /></svg>
        </div>
        <div class="dtools"><svg v-for="i in ['addl', 'refresh', 'funnel', 'tree', 'info']" :key="i" viewBox="0 0 24 24" v-html="icons[i]" /></div>
        <div class="treebox">
          <div class="tree">
            <div v-for="n in tree" :key="n.t" class="tr" :class="{ sub: n.d }">
              <span class="exp"><svg v-if="n.a" viewBox="0 0 8 8"><path :d="n.a === 'c' ? 'M2 0l4 4-4 4z' : 'M0 2h8L4 6z'" fill="#5b5b5b" /></svg></span>
              <svg class="ti" viewBox="0 0 24 24" v-html="icons[n.i]" /><span v-fit="n.w">{{ n.t }}</span>
            </div>
          </div>
          <div class="scroll"><div class="sbtn"><i class="up" /></div><div class="thumb" /></div>
        </div>
      </aside>
      <div class="vsplit"><span class="vdots" /></div>
      <section class="right">
        <div class="dhead r"><span v-fit="126">Topology Checker Panel</span><span class="grow" />
          <svg class="db" viewBox="0 0 12 12"><rect x=".5" y=".5" width="11" height="11" rx="2" fill="#f7f7f7" stroke="#777" /><path d="M3 5h4v4H3zM5 5V3h4v4H7" fill="none" stroke="#555" /></svg>
          <svg class="db" viewBox="0 0 12 12"><rect x=".5" y=".5" width="11" height="11" rx="2" fill="#f7f7f7" stroke="#777" /><path d="M3 3l6 6M9 3L3 9" stroke="#555" stroke-width="1.700" /></svg>
        </div>
        <div class="dtools r"><svg v-for="i in ['check', 'checkbox', 'wrench']" :key="i" viewBox="0 0 24 24" v-html="icons[i]" /></div>
        <div class="table"><div class="th"><span class="c"><b v-fit="25">Error</b></span><span class="c"><b v-fit="28">Layer</b></span><span class="f"><b v-fit="53">Feature ID</b></span></div></div>
        <div class="status">
          <span class="cb"><svg viewBox="0 0 12 12"><path d="M2.500 6l2.500 4 4.500-8.500" fill="none" stroke="#111" stroke-width="1.900" /></svg></span><span v-fit="58" class="se">Show errors</span>
          <span class="found"><span v-fit="97">0 errors were found</span></span>
        </div>
        <div class="tabs"><span class="tab act"><span v-fit="116">Topology Checker Panel</span></span><span class="tab"><span v-fit="93">Processing Toolbox</span></span></div>
        <div class="hsplit"><span class="hdots" /></div>
        <div class="msg">
          <svg class="okc" viewBox="0 0 24 22" v-html="icons.ok" />
          <strong v-fit="89">Layer Exported:</strong><span v-fit="164" class="m1">Successfully saved vector layer to</span><span v-fit="230" class="lnk">G:\Final Peta SLS 150\Peta Digital SLS 150.gpkg</span>
          <span class="grow" /><em v-fit="32">1 more</em>
          <svg class="xc" viewBox="0 0 18 18"><circle cx="9" cy="9" r="8.500" fill="#333a35" /><path d="M5.500 5.500l7 7M12.500 5.500l-7 7" stroke="#fff" stroke-width="2.500" stroke-linecap="round" /></svg>
          <i class="tri" />
        </div>
        <svg class="map" viewBox="313 411 1053 317">
          <g fill="none" stroke="#2b2422" stroke-width="1.100">
            <path d="M388 411L468 527L523 451L605 447L575 543" /><path d="M678 411L588 538L558 551L509 606L468 527L440 696L383 728" />
            <path d="M415 710L468 714L469 728" /><path d="M588 538L635 663L938 416L992 411" /><path d="M1348 411L1361 474L1366 473" />
          </g>
        </svg>
      </section>
    </main>
    <footer class="strip"><span class="s1" /><span class="s2" /></footer>

    <div class="layers">
      <div class="lt"><span v-fit="33">Layers</span><span class="lx">x</span></div>
      <div class="ltools">
        <svg v-for="i in ['brush', 'grp', 'eye', 'funneld', 'eps']" :key="i" viewBox="0 0 24 24" v-html="icons[i]" /><i class="tri" /><svg class="td" viewBox="0 0 24 24" v-html="icons.treed" />
        <svg class="lm" viewBox="0 0 17 12"><path d="M5 3l3 3-3 3M9 3l3 3-3 3" fill="none" stroke="#444" stroke-width="1.300" /></svg>
      </div>
      <div class="list">
        <div class="lr hl"><span class="cb"><svg viewBox="0 0 12 12"><path d="M2.500 6l2.500 4 4.500-8.500" fill="none" stroke="#111" stroke-width="1.900" /></svg></span><span class="sw red" /><span v-fit="44" class="un">Cleaned</span><span class="grow" /><span class="mem"><svg viewBox="0 0 24 24" v-html="icons.chipb" /></span></div>
        <div class="lr"><svg class="at" viewBox="0 0 24 24" v-html="icons.attr" /><span v-fit="33">Errors</span><span class="grow" /><span class="mem"><svg viewBox="0 0 24 24" v-html="icons.chipg" /></span></div>
        <div class="lr"><span class="cb" /><span class="sw pur" /><span v-fit="87" class="it">finalpetasls050</span></div>
      </div>
    </div>
  </div>
</template>

<style>
body { margin: 0; overflow: hidden; }
</style>
<style scoped>
* { box-sizing: border-box; }
.app { position: relative; width: 1366px; height: 731px; overflow: hidden; background: #efefef; color: #111; font: 11.7px/18px 'Open Sans', 'Noto Sans', sans-serif; display: flex; flex-direction: column; white-space: nowrap; }
svg { display: block; flex: none; }
.grow { flex: 1; }
.title { height: 23px; flex: none; background: #fff; display: flex; align-items: center; padding-left: 2px; }
.logo { width: 17px; height: 17px; margin-right: 4px; }
.ttext { margin-top: -1px; }
.wins { margin-left: auto; display: flex; padding: 0 19px 3px 0; gap: 33.5px; }
.wins svg { width: 12px; height: 12px; }
.menu { height: 20px; flex: none; background: #f0f0f0; border-bottom: 1px solid #d8d8d8; display: flex; gap: 14px; padding: 0 0 2px 10px; align-items: center; }
.mi { display: block; }
u { text-underline-offset: 1.5px; text-decoration-thickness: 1px; }
.bar { height: 39px; flex: none; display: flex; align-items: center; border-bottom: 1px solid #b2b2b2; background: linear-gradient(#fbfbfb, #ededed); }
.bar.last { height: 38px; }
.cell { width: 33px; height: 32px; flex: none; display: flex; align-items: center; padding-left: 5px; }
.cell.mag { padding-left: 4px; }
.cell.on { width: 32px; margin-right: 1px; padding-left: 4px; background: #dadada; border: 1px solid #aaa; border-radius: 2px; }
.cell.split { margin-right: 0; margin-left: 1px; }
.cell.mag .ic { width: 22px; height: 22px; }
.ic { width: 24px; height: 24px; }
.dim { filter: saturate(.5); opacity: .36; }
.grip { width: 16px; height: 18px; flex: none; padding: 0 2px 0 9px; background: radial-gradient(circle, #b0b0b0 .8px, transparent 1px) -1px 0 / 3px 3px; background-origin: content-box; background-clip: content-box; }
.grip.wide { width: 17px; padding-left: 10px; }
.bar > .grip:first-child { width: 12px; padding: 0 2px 0 5px; }
.sep { width: 7px; height: 18px; flex: none; background: linear-gradient(#cfcfcf, #cfcfcf) 4px 0 / 1px 100% no-repeat; }
.arr { width: 12px; height: 30px; flex: none; display: flex; align-items: center; justify-content: center; }
.arr.on { width: 13px; margin-right: -1px; background: #dadada; border: 1px solid #aaa; border-radius: 2px; height: 32px; }
.tri { width: 0; height: 0; border: 4px solid transparent; border-top: 4px solid #555; border-bottom: 0; flex: none; }
.tri.pale { border-top-color: #8c8c8c; }
.more { width: 17px; height: 12px; }
.sq { width: 24px; height: 24px; display: flex; align-items: center; justify-content: center; font: 600 12.5px 'Noto Sans', sans-serif; letter-spacing: -.4px; }
.spinc { width: 72px; flex: none; padding-left: 1px; }
.spin { display: flex; height: 20px; width: 71px; border: 1px solid #9c9c9c; border-radius: 3px; background: #f3f3f3; align-items: center; color: #666; }
.val { margin-left: 4px; }
.ud { margin-left: auto; width: 14px; height: 18px; border-left: 1px solid #aaa; display: flex; flex-direction: column; align-items: center; justify-content: center; gap: 4px; }
.up { width: 0; height: 0; border: 3.5px solid transparent; border-bottom: 4px solid #666; border-top: 0; }
.dn { width: 0; height: 0; border: 3.5px solid transparent; border-top: 4px solid #666; border-bottom: 0; }
.work { flex: 1; min-height: 0; display: flex; }
.dock { width: 306px; flex: none; display: flex; flex-direction: column; }
.dhead { height: 22px; display: flex; align-items: center; padding: 0 2px 1px 4px; flex: none; }
.db { width: 12px; height: 12px; margin-left: 2px; }
.dtools { height: 29px; flex: none; display: flex; align-items: center; gap: 9px; padding: 0 0 3px 8px; }
.dtools.r { height: 35px; padding: 0 0 9px 8px; }
.dtools svg { width: 16px; height: 16px; }
.treebox { flex: 1; min-height: 0; overflow: hidden; display: flex; background: #fff; border: 1px solid #b3b3b3; }
.tree { flex: 1; overflow: hidden; }
.tr { height: 18px; display: flex; align-items: center; padding-left: 4px; }
.tr.sub { padding-left: 20px; }
.exp { width: 16px; flex: none; }
.exp svg { width: 8px; height: 8px; }
.ti { width: 15px; height: 15px; margin-right: 6px; }
.scroll { width: 14px; background: #e6e6e6; border-left: 1px solid #b3b3b3; flex: none; }
.sbtn { height: 14px; background: #f4f4f4; border-bottom: 1px solid #b3b3b3; display: flex; align-items: center; justify-content: center; }
.thumb { height: 129px; background: #f7f7f7; border-bottom: 1px solid #b3b3b3; }
.vsplit { width: 6px; flex: none; display: flex; align-items: center; justify-content: center; padding-top: 32px; }
.vdots { width: 1px; height: 18px; margin-left: 1px; background: repeating-linear-gradient(#aaa 0 1px, transparent 1px 3px); }
.right { flex: 1; min-width: 0; display: flex; flex-direction: column; }
.table { height: 70px; flex: none; background: #fff; border: 1px solid #b3b3b3; }
.th { height: 19px; display: flex; background: linear-gradient(#fafafa, #eee); border-bottom: 1px solid #b3b3b3; }
.th b { font-weight: 400; }
.c { width: 35px; border-right: 1px solid #c3c3c3; display: flex; justify-content: center; }
.f { flex: 1; display: flex; justify-content: center; padding-right: 2px; }
.status { height: 26px; flex: none; display: flex; align-items: center; padding: 5px 0 0 0; font-size: 11.3px; }
.cb { width: 14px; height: 14px; background: #fff; border: 1px solid #b5b5b5; flex: none; }
.status .cb { margin-top: -1px; }
.cb svg { width: 12px; height: 12px; }
.se { margin-left: 5px; }
.found { flex: 1; display: flex; justify-content: center; padding-left: 24px; }
.tabs { height: 24px; flex: none; border-top: 1px solid #b3b3b3; display: flex; align-items: flex-start; font-size: 11.3px; }
.tab { height: 21px; width: 116px; background: #dcdcdc; border: 1px solid #b3b3b3; border-top: 0; border-radius: 0 0 3px 3px; display: flex; align-items: center; justify-content: center; padding-right: 2px; }
.tab.act { width: 139px; height: 24px; background: #f6f6f6; margin-top: -1px; padding: 0 0 0 10px; border-right: 0; justify-content: flex-start; }
.hsplit { flex: none; height: 6px; display: flex; justify-content: center; align-items: center; padding-left: 2px; }
.hdots { width: 16px; height: 1px; margin-top: -1px; background: repeating-linear-gradient(90deg, #aaa 0 1px, transparent 1px 3px); }
.msg { height: 30px; flex: none; background: #dff0d8; border: 1px solid #8a9e86; display: flex; align-items: center; padding: 2px 10px 0 9px; font-size: 11.3px; color: #000; }
.okc { width: 24px; height: 19px; margin: -3px 10px 0 0; }
.msg strong { margin-right: 2px; }
.m1 { margin-right: 3px; }
.lnk { color: #279208; text-decoration: underline; text-underline-offset: 1px; text-decoration-thickness: 1px; }
.xc { width: 17px; height: 17px; margin: -4px 4px 0 19px; }
.msg .tri { margin-top: -3px; }
.map { width: 1053px; margin-left: 1px; height: 317px; flex: none; background: #e77148; }
.strip { height: 3px; flex: none; background: #d9e9f0; display: flex; }
.s1 { margin-left: 48px; width: 343px; background: #fff; border: 1px solid #c3c3c3; border-bottom: 0; }
.s2 { margin-left: 344px; width: 48px; background: #f1f7fa; }
.layers { position: absolute; left: 11px; top: 435px; width: 189px; height: 293px; background: #fff; border-right: 1px solid #b3b3b3; box-shadow: 0 0 9px rgba(0, 0, 0, .35); clip-path: inset(-12px -12px 0 -12px); }
.lt { height: 31px; display: flex; align-items: center; padding-left: 8px; color: #999; }
.lx { margin: 4px 0 0 auto; width: 19px; height: 19px; background: #e1e1e1; color: #fff; text-align: center; line-height: 17px; font-size: 10px; }
.ltools { height: 31px; background: #efefef; display: flex; align-items: center; padding: 0 0 1px 8px; gap: 9.5px; }
.ltools svg { width: 16px; height: 16px; }
.ltools .tri { margin-left: -4px; }
.ltools svg.lm { width: 17px; height: 12px; margin-left: -1px; }
.list { border-top: 1px solid #b3b3b3; border-left: 1px solid #b3b3b3; height: 231px; font-weight: bold; }
.lr { height: 18px; display: flex; align-items: center; padding: 0 5px 0 23px; }
.hl { background: #f0f0f0; }
.sw { width: 16px; height: 16px; margin: 0 6px 0 6px; flex: none; }
.red { background: #a47272; border: 1px solid #6d4b4b; }
.pur { background: #987db7; border: 1px solid #675380; }
.un { text-decoration: underline; text-underline-offset: 1.5px; }
.it { font-style: italic; color: #858585; }
.at { width: 15px; height: 15px; margin: 0 7px 0 0; }
.mem { width: 16px; height: 16px; background: #f8f8f8; border: 1px solid #ddd; display: flex; align-items: center; justify-content: center; }
.mem svg { width: 14px; height: 14px; }
</style>
